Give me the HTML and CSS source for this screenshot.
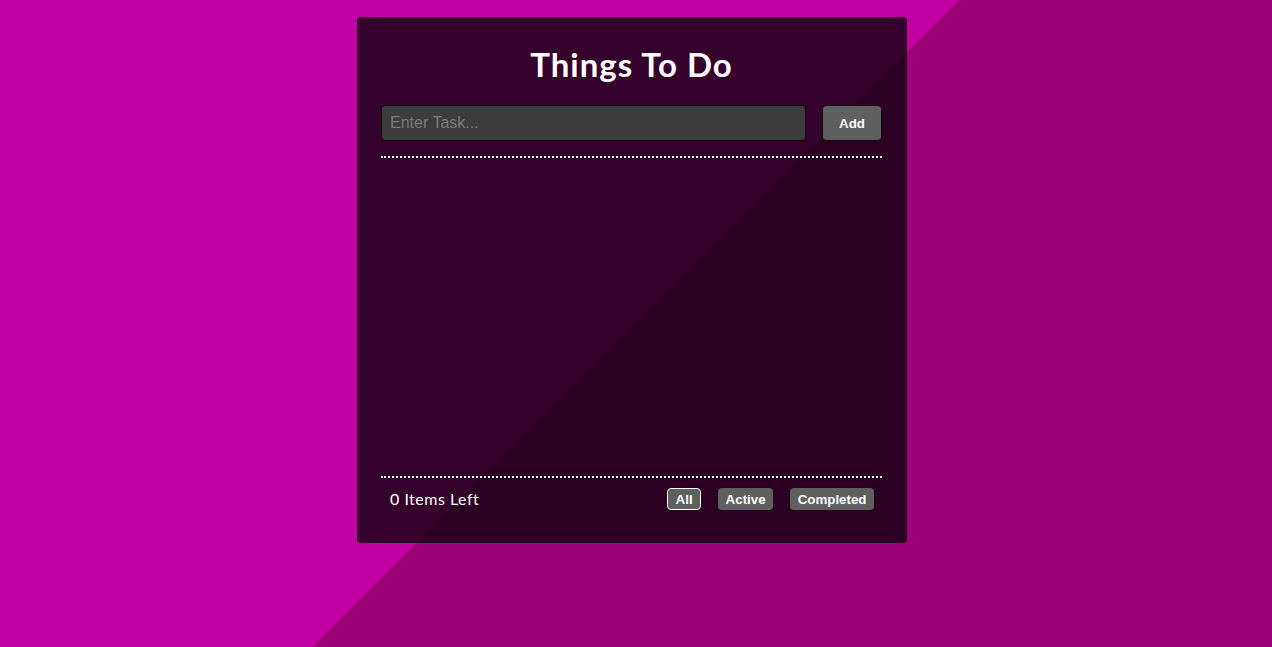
FILE: index.html
```html
<!DOCTYPE html>
<html lang="en">
<head>
<meta charset="utf-8">
<title>Things To Do</title>
<link rel="stylesheet" href="styles.css">
</head>
<body>
<main class="card">
  <h1 class="title">Things To Do</h1>
  <form class="entry" onsubmit="return false">
    <input class="task-input" type="text" placeholder="Enter Task...">
    <button class="add-btn" type="submit">Add</button>
  </form>
  <ul class="list"></ul>
  <footer class="footer">
    <span class="count">0 Items Left</span>
    <div class="filters">
      <button class="filter is-active">All</button>
      <button class="filter">Active</button>
      <button class="filter">Completed</button>
    </div>
  </footer>
</main>
</body>
</html>
```
FILE: styles.css
```css
html {
  height: 100%;
  background: linear-gradient(135deg, #c000a0 50%, #9e007a 50%);
}
body {
  margin: 0;
  padding-right: 8px;
  min-height: 100%;
  font-family: "Lato", "Liberation Sans", sans-serif;
  color: #fff;
}
.card {
  box-sizing: border-box;
  width: 550px;
  height: 526px;
  margin: 17px auto 0;
  padding: 0 25px 0 24px;
  background: rgba(0, 0, 0, 0.72);
  border-radius: 4px;
  display: flex;
  flex-direction: column;
}
.title {
  margin: 23px 0 17px;
  font-size: 33px;
  line-height: 48px;
  font-weight: 700;
  text-align: center;
  letter-spacing: 1px;
}
.entry {
  display: flex;
  gap: 16px;
  height: 36px;
  margin: 0;
  padding-bottom: 15px;
  border-bottom: 2px dotted #fff;
}
.task-input {
  flex: 1;
  box-sizing: border-box;
  height: 36px;
  padding: 0 8px;
  background: #3c3c3c;
  border: 1px solid #0c0c0c;
  border-radius: 4px;
  color: #fff;
  font-family: "Liberation Sans", Arial, sans-serif;
  font-size: 16px;
  outline: none;
}
.task-input::placeholder {
  color: #7a7a7a;
}
.add-btn {
  box-sizing: border-box;
  width: 60px;
  height: 36px;
  background: #5f5f5f;
  border: 1px solid #0c0c0c;
  border-radius: 4px;
  color: #fff;
  font-family: "Liberation Sans", Arial, sans-serif;
  font-size: 13.33px;
  font-weight: 700;
}
.list {
  margin: 0;
  padding: 0;
  list-style: none;
  height: 318px;
  border-bottom: 2px dotted #fff;
}
.footer {
  display: flex;
  align-items: center;
  justify-content: space-between;
  padding: 10px 8px 0 9px;
}
.count {
  font-size: 16px;
  line-height: 22px;
  letter-spacing: 0.5px;
}
.filters {
  display: flex;
  gap: 17px;
}
.filter {
  box-sizing: border-box;
  height: 22px;
  padding: 0 6.5px;
  background: #5f5f5f;
  border: 1px solid transparent;
  border-radius: 4px;
  color: #fff;
  font-family: "Liberation Sans", Arial, sans-serif;
  font-size: 13.33px;
  font-weight: 700;
}
.filter.is-active {
  padding: 0 7.5px;
  border-color: #fff;
}
```
